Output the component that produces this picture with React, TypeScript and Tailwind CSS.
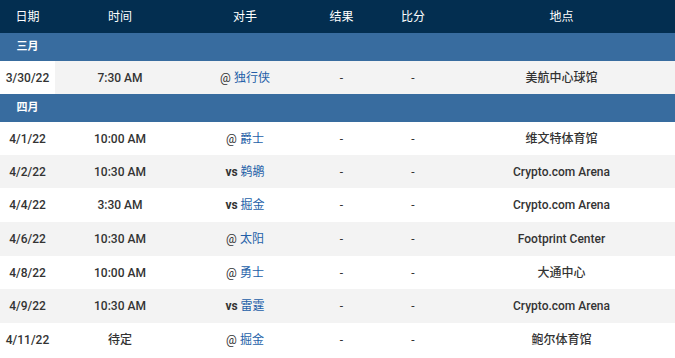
import React from 'react'

type Game = {
  date: string
  time: string
  prefix: '@' | 'vs'
  team: string
  venue: string
}

const months: { label: string; games: Game[] }[] = [
  {
    label: '三月',
    games: [{ date: '3/30/22', time: '7:30 AM', prefix: '@', team: '独行侠', venue: '美航中心球馆' }],
  },
  {
    label: '四月',
    games: [
      { date: '4/1/22', time: '10:00 AM', prefix: '@', team: '爵士', venue: '维文特体育馆' },
      { date: '4/2/22', time: '10:30 AM', prefix: 'vs', team: '鹈鹕', venue: 'Crypto.com Arena' },
      { date: '4/4/22', time: '3:30 AM', prefix: 'vs', team: '掘金', venue: 'Crypto.com Arena' },
      { date: '4/6/22', time: '10:30 AM', prefix: '@', team: '太阳', venue: 'Footprint Center' },
      { date: '4/8/22', time: '10:00 AM', prefix: '@', team: '勇士', venue: '大通中心' },
      { date: '4/9/22', time: '10:30 AM', prefix: 'vs', team: '雷霆', venue: 'Crypto.com Arena' },
      { date: '4/11/22', time: '待定', prefix: '@', team: '掘金', venue: '鲍尔体育馆' },
    ],
  },
]

const font = { fontFamily: 'Roboto, "Noto Sans CJK SC", sans-serif' }

const stickyShadow = 'relative shadow-[2px_0_3px_rgba(0,0,0,0.07)]'

export default function App() {
  return (
    <div className="w-[675px] h-[358px] overflow-hidden bg-white text-[12px] text-[#333]" style={font}>
      <table className="w-full table-fixed border-collapse">
        <colgroup>
          <col className="w-[55px]" />
          <col className="w-[130px]" />
          <col className="w-[120px]" />
          <col className="w-[73px]" />
          <col className="w-[70px]" />
          <col />
        </colgroup>
        <thead>
          <tr className="h-[33px] bg-[#032e50] text-white">
            <th className={`font-normal ${stickyShadow}`}>日期</th>
            <th className="font-normal">时间</th>
            <th className="font-normal">对手</th>
            <th className="font-normal">结果</th>
            <th className="font-normal">比分</th>
            <th className="font-normal">地点</th>
          </tr>
        </thead>
        <tbody>
          {months.map((m, mi) => (
            <React.Fragment key={m.label}>
              <tr className="h-[28px] bg-[#386c9f] text-white">
                <td className="text-center font-bold text-[11px]">{m.label}</td>
                <td colSpan={5} />
              </tr>
              {m.games.map((g, gi) => {
                const first = mi === 0
                const gray = first || gi % 2 === 1
                // rows in the reference are ~33.4px tall, so mix 33 and 34
                const tall = !first && (gi === 2 || gi === 3 || gi === 5)
                return (
                  <tr key={g.date} className={`${tall ? 'h-[34px]' : 'h-[33px]'} ${gray ? 'bg-[#f3f3f3]' : 'bg-white'}`}>
                    <td className={`text-center font-medium ${first ? 'bg-white' : ''} ${stickyShadow}`}>{g.date}</td>
                    <td className="text-center font-medium">{g.time}</td>
                    <td className="text-center">
                      <span className={g.prefix === 'vs' ? 'font-bold' : ''}>{g.prefix}</span>{' '}
                      <span className="text-[#245fa8]">{g.team}</span>
                    </td>
                    <td className="text-center">-</td>
                    <td className="text-center">-</td>
                    <td className="text-center font-medium">{g.venue}</td>
                  </tr>
                )
              })}
            </React.Fragment>
          ))}
        </tbody>
      </table>
    </div>
  )
}
